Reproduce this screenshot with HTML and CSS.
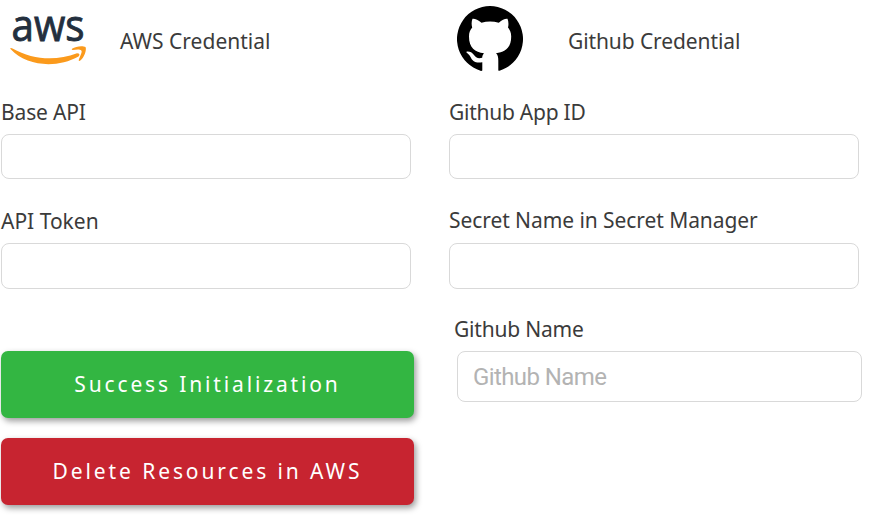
FILE: index.html
```html
<!DOCTYPE html>
<html lang="en">
<head>
<meta charset="utf-8">
<title>Credentials</title>
<link rel="stylesheet" href="styles.css">
</head>
<body>
<main class="page">
  <section class="column">
    <header class="heading">
      <svg class="aws-logo" width="90" height="78" viewBox="0 0 90 78" role="img">
        <text class="aws-word" x="11.500" y="40.500" textLength="73" lengthAdjust="spacingAndGlyphs">aws</text>
        <path fill="#fb9a1c" d="M11 48 Q9.500 47.700 11 49.600 C27 66.500 57 68.500 78.500 56.500 Q81 53.600 77 53.300 C56 61 33 60 12.500 48.400Z"/>
        <path fill="#fb9a1c" d="M72 48.700C76 45.900 83 45.500 85.500 47C87 50 84 58 80 60.800Q78 61.500 79 59C80.500 55 82.500 51.500 81.300 50.400C80 49.200 76 49.600 73 50Q71 50 72 48.700Z"/>
      </svg>
      <h2 class="title title-aws">AWS Credential</h2>
    </header>
    <div class="field">
      <label class="label label-base" for="base">Base API</label>
      <input class="input" id="base" type="text">
    </div>
    <div class="field field-second">
      <label class="label label-token" for="token">API Token</label>
      <input class="input input-tall" id="token" type="text">
    </div>
    <div class="actions">
      <button class="button success" type="button">Success Initialization</button>
      <button class="button danger" type="button">Delete Resources in AWS</button>
    </div>
  </section>
  <section class="column">
    <header class="heading">
      <svg class="github-logo" width="66" height="66" viewBox="0 0 66 66" role="img">
        <path d="M25.300 64.500C24.800 65 24 65 23.500 64.700A33 33 0 1 1 42.500 64.700C42 65 41.300 65 41.300 64V55C41.300 51 40.800 49 39 47.300C48 46.300 54.200 42 54.200 30.500C54.200 26.500 53 24 51 21.500C51.800 18.500 51.500 15.500 50.500 12.800C48 12.500 45 14 41.800 16.700C36 15.200 30 15.200 24.500 16.700C21 14 18 12.500 15.500 12.800C14.500 15.500 14.300 18.500 15.200 21.500C13 24 12 26.500 12 30.500C12 42 18 46.300 27 47.300C26 48.500 25.200 50 25.200 51.800C21 53 18.700 51.500 17 49C15 46.300 12.500 45.300 9.500 45.700C9 46.500 10 47 11 47.700C13.800 50 13.500 52.500 16.500 55C19 56.800 22 56.800 25.300 56.200Z"/>
      </svg>
      <h2 class="title title-github">Github Credential</h2>
    </header>
    <div class="field">
      <label class="label label-app" for="app">Github App ID</label>
      <input class="input" id="app" type="text">
    </div>
    <div class="field field-second">
      <label class="label label-secret" for="secret">Secret Name in Secret Manager</label>
      <input class="input input-tall" id="secret" type="text">
    </div>
    <div class="field field-name">
      <label class="label label-name" for="name">Github Name</label>
      <input class="input input-name" id="name" type="text" placeholder="Github Name">
    </div>
  </section>
</main>
</body>
</html>
```

FILE: styles.css
```css
* { box-sizing: border-box; }

body {
  margin: 0;
  background: #fff;
  color: #3b3b3b;
  font-family: "Noto Sans", sans-serif;
}

.page {
  display: grid;
  grid-template-columns: 413px 413px;
  column-gap: 35px;
  min-height: 516px;
  padding-left: 1px;
}

.heading {
  display: flex;
  align-items: flex-start;
  height: 97px;
}

.aws-logo { margin-left: -1px; flex: none; overflow: visible; }
.aws-word { font: 43px "Open Sans", sans-serif; fill: #232f3e; stroke: #232f3e; stroke-width: .9px; }
.github-logo { margin: 6px 0 0 8px; flex: none; }

.title {
  margin: 26px 0 0;
  font-size: 21px;
  font-weight: 400;
  line-height: 30px;
  white-space: nowrap;
}
.title-aws { margin-left: 30px; }
.title-github { margin-left: 45px; letter-spacing: -.1px; }

.field { display: flex; flex-direction: column; align-items: flex-start; }
.label { font-size: 21px; line-height: 30px; white-space: nowrap; }
.label-base { letter-spacing: -.15px; }
.label-app { letter-spacing: -.25px; }
.label-secret { letter-spacing: -.07px; }
.label-token { padding-top: 1px; margin-bottom: -1px; }

.input {
  width: 410px;
  height: 45px;
  margin: 7px 0 0;
  padding: 0 16px;
  border: 1px solid #d9d9d9;
  border-radius: 8px;
  background: #fff;
  font: 24px Roboto, sans-serif;
}
.input-tall { height: 46px; margin-top: 8px; }
.field-second { margin-top: 26px; }
.field-name { margin-top: 25px; }
.label-name { margin-left: 5px; letter-spacing: -.2px; }
.input-name { width: 405px; height: 51px; margin: 7px 0 0 8px; padding: 1px 15px 0; letter-spacing: -.6px; }
.input-name::placeholder { color: #b3b3b3; opacity: 1; }

.actions { display: flex; flex-direction: column; gap: 20px; margin-top: 62px; }
.button {
  height: 67px;
  padding: 0 0 2px;
  border: 0;
  border-radius: 7px;
  color: #fff;
  font: 21px "Noto Sans", sans-serif;
  letter-spacing: 2.900px;
  box-shadow: 2px 3px 6px rgba(0, 0, 0, .4);
}
.success { background: #33b642; letter-spacing: 2.850px; }
.danger { background: #c72430; }
```
